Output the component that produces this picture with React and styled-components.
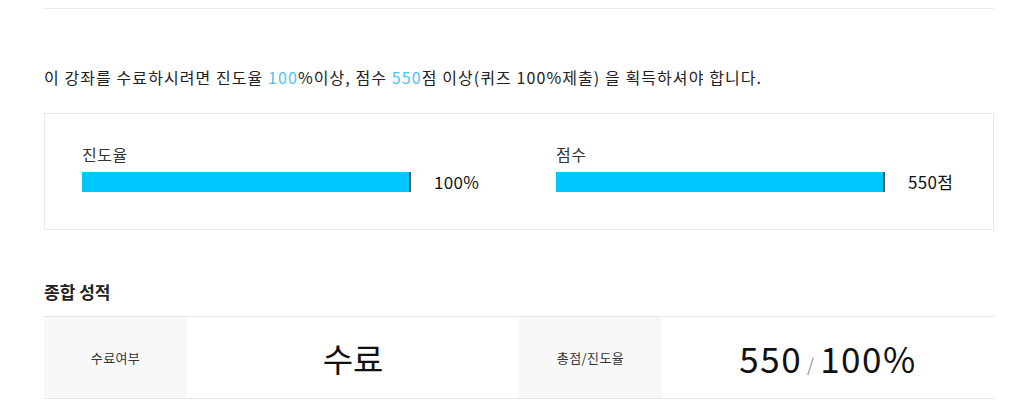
import React from 'react';
import styled, {createGlobalStyle} from 'styled-components';

const GlobalStyle = createGlobalStyle`
  body {
    margin: 0;
    background: #fff;
    font-family: 'Noto Sans CJK KR', 'Noto Sans', sans-serif;
    color: #222;
  }
`;

const progress = [
  {label: '진도율', percent: 100, value: '100%'},
  {label: '점수', percent: 100, value: '550점'},
];

const App = () => {
  return (
    <Page>
      <GlobalStyle />
      <Divider />
      <Notice>
        이 강좌를 수료하시려면 진도율 <Point>100</Point>%이상, 점수{' '}
        <Point>550</Point>점 이상(퀴즈 100%제출) 을 획득하셔야 합니다.
      </Notice>
      <ProgressBox>
        {progress.map((item) => (
          <ProgressItem key={item.label}>
            <ProgressLabel>{item.label}</ProgressLabel>
            <BarRow>
              <Track>
                <Fill style={{width: `${item.percent}%`}} />
              </Track>
              <BarValue>{item.value}</BarValue>
            </BarRow>
          </ProgressItem>
        ))}
      </ProgressBox>
      <Heading>종합 성적</Heading>
      <ResultTable>
        <HeadCell>수료여부</HeadCell>
        <ValueCell>수료</ValueCell>
        <HeadCell>총점/진도율</HeadCell>
        <ValueCell>
          <Num>550</Num>
          <Slash>/</Slash>
          <Num>100%</Num>
        </ValueCell>
      </ResultTable>
    </Page>
  );
};

const Page = styled.div`
  width: 950px;
  padding: 8px 0 0 0;
  margin-left: 44px;
`;

const Divider = styled.div`
  height: 1px;
  background: #ececec;
`;

const Notice = styled.p`
  margin: 57px 0 0 0;
  font-size: 16px;
  line-height: 22px;
  color: #222;
  letter-spacing: 1.08px;
`;

const Point = styled.span`
  color: #4fc3f7;
`;

const ProgressBox = styled.div`
  margin-top: 25px;
  border: 1px solid #e8e8e8;
  display: grid;
  grid-template-columns: 1fr 1fr;
  padding: 30px 0 35px 0;
`;

const ProgressItem = styled.div`
  padding-left: 37px;
`;

const ProgressLabel = styled.div`
  font-size: 16px;
  line-height: 20px;
  color: #333;
  letter-spacing: 0.5px;
`;

const BarRow = styled.div`
  margin-top: 5px;
  display: flex;
  align-items: center;
  gap: 23px;
`;

const Track = styled.div`
  width: 329px;
  height: 20px;
  background: #eee;
`;

const Fill = styled.div`
  height: 100%;
  background: #00c8ff;
  border-right: 2px solid #555;
  box-sizing: border-box;
`;

const BarValue = styled.span`
  font-size: 17px;
  color: #111;
  letter-spacing: 0.3px;
`;

const Heading = styled.h3`
  margin: 50px 0 0 0;
  font-size: 17px;
  line-height: 24px;
  font-weight: 700;
  color: #222;
`;

const ResultTable = styled.div`
  margin-top: 12px;
  display: grid;
  grid-template-columns: 143px 332px 143px 332px;
  border-top: 1px solid #e6e6e6;
  border-bottom: 1px solid #e6e6e6;
  height: 81px;
`;

const HeadCell = styled.div`
  background: #f8f8f8;
  display: flex;
  align-items: center;
  justify-content: center;
  font-size: 13px;
  color: #333;
  letter-spacing: 0.4px;
`;

const ValueCell = styled.div`
  display: flex;
  align-items: center;
  justify-content: center;
  font-size: 33px;
  color: #111;
`;

const Num = styled.span`
  font-size: 35px;
  letter-spacing: 1.5px;
`;

const Slash = styled.span`
  font-size: 18px;
  color: #999;
  margin: 12px 6px 0 5px;
`;

export default App;
